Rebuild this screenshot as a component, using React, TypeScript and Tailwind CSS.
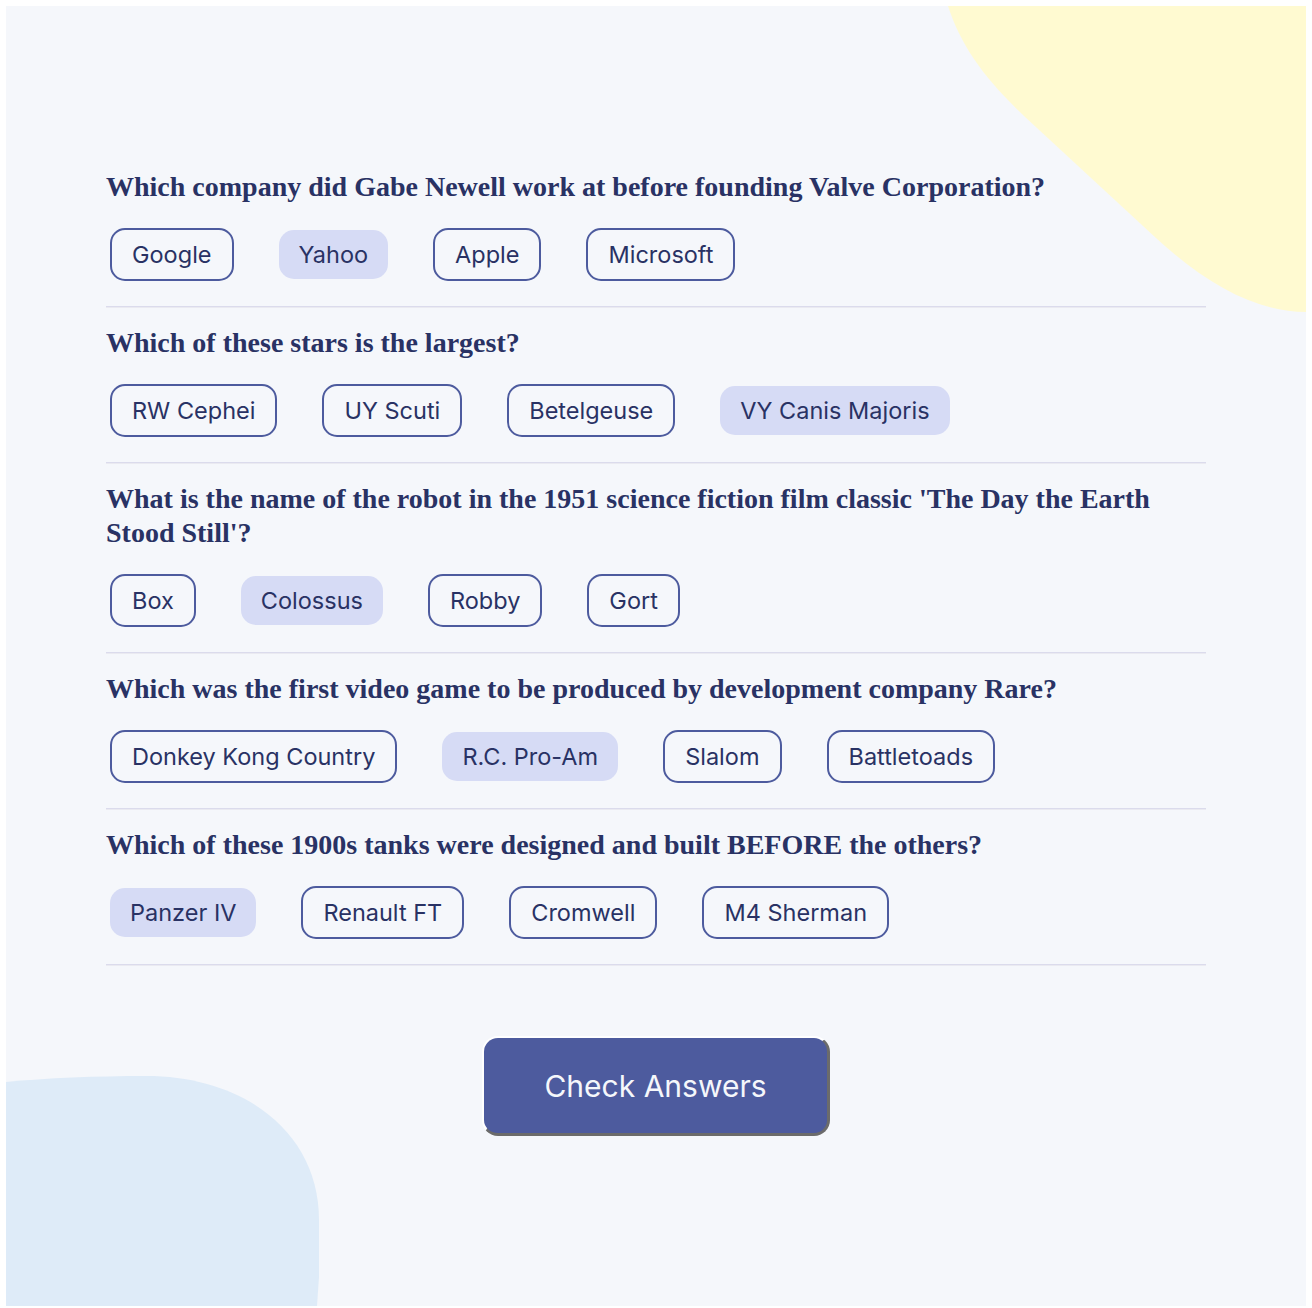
import React from "react";

type Q = { q: string; answers: string[]; selected: number };

const questions: Q[] = [
  {
    q: "Which company did Gabe Newell work at before founding Valve Corporation?",
    answers: ["Google", "Yahoo", "Apple", "Microsoft"],
    selected: 1,
  },
  {
    q: "Which of these stars is the largest?",
    answers: ["RW Cephei", "UY Scuti", "Betelgeuse", "VY Canis Majoris"],
    selected: 3,
  },
  {
    q: "What is the name of the robot in the 1951 science fiction film classic 'The Day the Earth Stood Still'?",
    answers: ["Box", "Colossus", "Robby", "Gort"],
    selected: 1,
  },
  {
    q: "Which was the first video game to be produced by development company Rare?",
    answers: ["Donkey Kong Country", "R.C. Pro-Am", "Slalom", "Battletoads"],
    selected: 1,
  },
  {
    q: "Which of these 1900s tanks were designed and built BEFORE the others?",
    answers: ["Panzer IV", "Renault FT", "Cromwell", "M4 Sherman"],
    selected: 0,
  },
];

export default function App() {
  return (
    <div className="w-full h-[1308px] bg-white p-[6px]">
      <div className="relative w-[1300px] h-[1300px] overflow-hidden bg-[#f5f7fb]">
        <svg
          className="absolute inset-0"
          width="1300"
          height="1300"
          viewBox="0 0 1300 1300"
        >
          <path
            d="M 942 0 C 955 40, 978 72, 1018 110 L 1150 232 C 1200 278, 1250 306, 1300 306 L 1300 0 Z"
            fill="#FFFAD1"
          />
          <path
            d="M 0 1076 C 40 1072, 90 1070, 140 1070 C 240 1070, 313 1128, 313 1214 L 313 1271 L 311 1300 L 0 1300 Z"
            fill="#DEEBF8"
          />
        </svg>
        <div className="relative px-[100px] pt-[164px]">
          {questions.map((item, i) => (
            <div key={i} className={i === 0 ? "" : "mt-[18px]"}>
              <h2 className="font-['Liberation_Serif',serif] font-bold text-[28px] leading-[34px] text-[#293264]">
                {item.q}
              </h2>
              <div className="mt-[24px] ml-[4px] flex items-center gap-[45px]">
                {item.answers.map((a, j) =>
                  j === item.selected ? (
                    <div
                      key={j}
                      className="rounded-[15px] bg-[#D6DBF5] px-[20px] py-[12px] font-['Inter',sans-serif] text-[23.5px] leading-[25px] text-[#293264]"
                    >
                      {a}
                    </div>
                  ) : (
                    <div
                      key={j}
                      className="rounded-[15px] border-2 border-[#4D5B9E] px-[20px] py-[12px] font-['Inter',sans-serif] text-[23.5px] leading-[25px] text-[#293264]"
                    >
                      {a}
                    </div>
                  )
                )}
              </div>
              <div className="mt-[25px] border-t border-b border-t-[#dbdbec] border-b-[#eaeaf1]" />
            </div>
          ))}
          <div className="mt-[70px] flex justify-center">
            <div className="rounded-[16px] border-t-2 border-l-2 border-r-[3px] border-b-[3px] border-t-white border-l-white border-r-[#6b6b6b] border-b-[#6b6b6b] bg-[#4D5B9E] px-[60px] pt-[30px] pb-[29px] font-['Inter',sans-serif] text-[30px] leading-[36px] text-[#F5F7FB]">
              Check Answers
            </div>
          </div>
        </div>
      </div>
    </div>
  );
}
